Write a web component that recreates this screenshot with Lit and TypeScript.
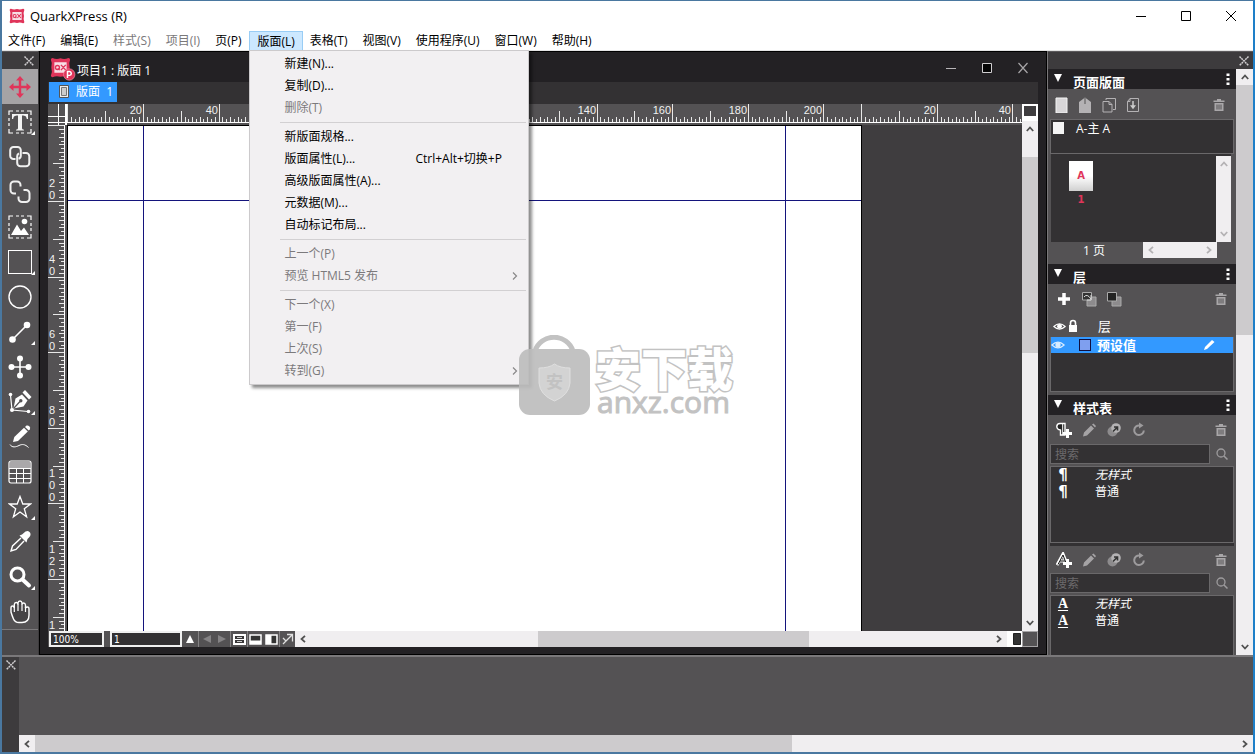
import { LitElement, html, svg, css, nothing } from "lit";
import { customElement, property } from "lit/decorators.js";
import { classMap } from "lit/directives/class-map.js";
import { styleMap } from "lit/directives/style-map.js";

const PX_PER_MM = 3.78;
const PAGE_MM = 210;

const toolIcon = (body: unknown) => html`<svg class="tool-icon" viewBox="0 0 24 24" width="24" height="24" aria-hidden="true">${body}</svg>`;
const smallIcon = (body: unknown) => html`<svg viewBox="0 0 16 16" width="16" height="16" aria-hidden="true">${body}</svg>`;

const dashedBox = svg`<path d="M1 5V1H5M8 1H11M13 1H16M19 1H23V5M23 8V11M23 13V16M23 19V23H19M16 23H13M11 23H8M5 23H1V19M1 16V13M1 11V8" fill="none" stroke="#fff" stroke-width="1.2"/>`;

const tools = [
  { name: "Item", active: true, more: false, icon: svg`<path d="M12 1l4 4.5h-2.8v5.300h5.300V8L23 12l-4.500 4v-2.800h-5.300v5.300H16L12 23l-4-4.500h2.800v-5.300H5.500V16L1 12l4.500-4v2.800h5.300V5.500H8z" fill="#e0355a"/>` },
  { name: "Text", active: false, more: true, icon: svg`${dashedBox}<path d="M4 4H20V9H18.800C18.500 6.500 17.500 5.500 14 5.500V18C14 19.500 14.800 19.500 16 19.700V20.500H8V19.700C9.200 19.500 10 19.500 10 18V5.500C6.500 5.500 5.500 6.500 5.200 9H4Z" fill="#f4f4f4"/>` },
  { name: "Link", active: false, more: false, icon: svg`<g fill="none" stroke="#f0f0f0" stroke-width="2"><path d="M7.500 14H5.500A3.300 3.300 0 0 1 2.200 10.700V5.300A3.300 3.300 0 0 1 5.500 2H9.500A3.300 3.300 0 0 1 12.800 5.300V10.700A3.300 3.300 0 0 1 10.500 13.800"/><path d="M14.500 8H18A3.300 3.300 0 0 1 21.300 11.300V18A3.300 3.300 0 0 1 18 21.300H12.500A3.300 3.300 0 0 1 9.200 18V11.300A3.300 3.300 0 0 1 11 8.300"/></g>` },
  { name: "Unlink", active: false, more: false, icon: svg`<g fill="none" stroke="#f0f0f0" stroke-width="2"><path d="M8 13.500H6A3.500 3.500 0 0 1 2.500 10V5A3.500 3.500 0 0 1 6 1.500H9A3.500 3.500 0 0 1 12.500 5V6.500"/><path d="M15.500 10H18A3.500 3.500 0 0 1 21.500 13.500V18.500A3.500 3.500 0 0 1 18 22H14A3.500 3.500 0 0 1 10.500 18.500V16.500"/></g>` },
  { name: "Picture", active: false, more: false, icon: svg`${dashedBox}<circle cx="16.500" cy="6.500" r="2.800" fill="#fff"/><path d="M3 20L9 9.500L13 16L16 12.500L21 20Z" fill="#fff"/>` },
  { name: "Rectangle", active: false, more: true, icon: svg`<rect x=".500" y=".500" width="23" height="23" fill="none" stroke="#fff"/>` },
  { name: "Oval", active: false, more: false, icon: svg`<circle cx="12" cy="12" r="11" fill="none" stroke="#fff" stroke-width="1.400"/>` },
  { name: "Line", active: false, more: true, icon: svg`<path d="M5 19L19 5" stroke="#fff" stroke-width="1.600"/><circle cx="19" cy="5" r="3.300" fill="#fff"/><circle cx="4.500" cy="19.500" r="3.300" fill="#fff"/>` },
  { name: "Move points", active: false, more: false, icon: svg`<path d="M12 4V20M4 12H20" stroke="#fff" stroke-width="1.600"/><g fill="#fff"><circle cx="12" cy="3.500" r="3"/><circle cx="12" cy="20.500" r="3"/><circle cx="3.500" cy="12" r="3"/><circle cx="20.500" cy="12" r="3"/></g>` },
  { name: "Pen", active: false, more: true, icon: svg`<path d="M2.500 5L4 20L20 21.500" fill="none" stroke="#fff" stroke-width="1.200"/><g fill="#fff"><circle cx="2.500" cy="4.500" r="1.800"/><circle cx="4" cy="20" r="2"/><circle cx="20.500" cy="21.500" r="1.800"/><path d="M5.500 18.500L7.500 8.500L14 4.500L19.500 10.500L15.500 16.500Z"/><path d="M14.500 2.500L17 0L23.500 7L21 9.500Z"/></g><path d="M6 18L12 11.500" stroke="#545254" stroke-width="1.200"/><circle cx="12.800" cy="10.800" r="1.700" fill="#545254"/>` },
  { name: "Pencil", active: false, more: false, icon: svg`<g fill="#fff"><path d="M5 17L6.300 12L16 2.800L19.800 6.600L10 16Z"/><path d="M17 2L18.500.600Q20 0 21.300 1.200Q22.800 2.800 21.800 4.300L20.700 5.500Z"/></g><path d="M2 19.500C4 23 8 22 11 20.500S17 19 20.500 22.500" fill="none" stroke="#fff" stroke-width="1"/>` },
  { name: "Table", active: false, more: false, icon: svg`<rect x="1" y="1" width="22" height="22" rx="2" fill="none" stroke="#fff" stroke-width="1.200"/><path d="M2 2H22V8H2Z" fill="#aaa8aa"/><path d="M1 8.500H23M1 13.500H23M1 18.500H23M8.500 8V23M15.500 8V23" stroke="#fff"/>` },
  { name: "Star", active: false, more: true, icon: svg`<path d="M12 1.500L14.800 9H22.500L16.300 13.800L18.600 21.800L12 17L5.400 21.800L7.700 13.800L1.500 9H9.200Z" fill="none" stroke="#fff" stroke-width="1.300"/>` },
  { name: "Eyedropper", active: false, more: false, icon: svg`<path d="M13 8L4.500 16L3 21L8 19.500L16 11" fill="none" stroke="#fff" stroke-width="1.400"/><path d="M11.500 5.500L14 4.500L17.500 1.500Q20.500 0 22 2.500Q23.500 5 21 7.500L19.500 9L18.500 12.500Z" fill="#fff"/>` },
  { name: "Zoom", active: false, more: true, icon: svg`<circle cx="9.500" cy="9.500" r="6.500" fill="none" stroke="#fff" stroke-width="3"/><path d="M14.500 14.500L21 20.500" stroke="#fff" stroke-width="4" stroke-linecap="round"/>` },
  { name: "Pan", active: false, more: false, icon: svg`<path d="M3 8Q3 6 4.500 6T6.300 8V4.500Q6.500 2.500 8.200 2.500T10 4.500V3Q10.200 1 12 1T14 3V4.500Q14.200 3 15.700 3T17.500 5V8Q18 7 19.500 7T21 9V15Q21 22.500 14 22.500H11Q7 22.500 5.500 19T3 12Z" fill="#454345" stroke="#fff" stroke-width="1.400"/><path d="M6.300 7V12M10 4V11M14 4V11M17.500 7V12" stroke="#fff" stroke-width="1.200"/>` },
];

const menus = [
  ["文件(F)"], ["编辑(E)"], ["样式(S)", "off"], ["项目(I)", "off"], ["页(P)"], ["版面(L)", "open"],
  ["表格(T)"], ["视图(V)"], ["使用程序(U)"], ["窗口(W)"], ["帮助(H)"],
];

type Entry = { label: string; off?: boolean; keys?: string; sub?: boolean };
const entryGroups: Entry[][] = [
  [{ label: "新建(N)..." }, { label: "复制(D)..." }, { label: "删除(T)", off: true }],
  [{ label: "新版面规格..." }, { label: "版面属性(L)...", keys: "Ctrl+Alt+切换+P" }, { label: "高级版面属性(A)..." }, { label: "元数据(M)..." }, { label: "自动标记布局..." }],
  [{ label: "上一个(P)", off: true }, { label: "预览 HTML5 发布", off: true, sub: true }],
  [{ label: "下一个(X)", off: true }, { label: "第一(F)", off: true }, { label: "上次(S)", off: true }, { label: "转到(G)", off: true, sub: true }],
];

const trash = smallIcon(svg`<path d="M3 3.500H6V2H10V3.500H13.500V5H2.500V3.500ZM3.500 6H12.500V14H3.500Z" fill="#a9a7a9"/><path d="M6 7.500V12.500M8 7.500V12.500M10 7.500V12.500" stroke="#545254"/>`);
const cross = html`<svg viewBox="0 0 10 10" width="10" height="10" aria-hidden="true"><path d="M0.500 0.500L9.500 9.500M9.500 0.500L0.500 9.500" stroke="#cfcdcf" stroke-width="1.500" stroke-dasharray="2 .6"/></svg>`;
const plusMark = svg`<path d="M11.500 7V16M7 11.500H16" stroke="#fff" stroke-width="3"/>`;
const pencil = smallIcon(svg`<path d="M2 14.500L3 10.500L10 3.500L13 6.500L6 13.500ZM11 2.500L12.500 1.500L15 4L14 5.500Z" fill="#a5a3a5"/>`);
const duplicate = smallIcon(svg`<circle cx="6.500" cy="9.500" r="5" fill="#8d8b8d"/><circle cx="10" cy="6" r="4.800" fill="#b4b2b4"/><path d="M7 9.500L11 5.500M8 5H11.500V8.500" stroke="#333" stroke-width="1.600" fill="none"/>`);
const refresh = smallIcon(svg`<path d="M8.500 3.500A4.800 4.800 0 1 0 12.800 8.500" fill="none" stroke="#9d9b9d" stroke-width="2"/><path d="M8 .500V6.500L12.500 3.500Z" fill="#9d9b9d"/>`);
const magnifier = smallIcon(svg`<circle cx="7" cy="7" r="4" fill="none" stroke="#9d9b9d" stroke-width="1.300"/><path d="M10 10L13.500 13.500" stroke="#9d9b9d" stroke-width="1.500"/>`);
const eye = (fill: string) => svg`<path d="M1 8Q8 1.500 15 8Q8 14.500 1 8Z" fill="none" stroke="${fill}" stroke-width="1.300"/><circle cx="8" cy="7.800" r="3" fill="${fill}"/>`;

/** Ruler strip, scaled in millimetres; it starts again at zero after every page. */
@customElement("mm-ruler")
class MmRuler extends LitElement {
  @property({ type: Boolean, reflect: true }) vertical = false;
  @property({ type: Number }) span = 280;

  static styles = css`
    :host { display: block; overflow: hidden; min-width: 0; min-height: 0; background: #545254; }
    :host([vertical]) { grid-column: 1; }
    svg { display: block; width: 100%; height: 100%; overflow: hidden; }
    text { fill: #f0f0f0; font: 11px "Liberation Sans", sans-serif; }
  `;

  render() {
    const size = this.vertical ? 19 : 21;
    const base = size - 2;
    const marks = [];
    for (let mm = 0; mm <= this.span; mm++) {
      const value = !this.vertical && mm >= PAGE_MM ? mm - PAGE_MM : mm;
      const at = Math.round(0.4 + mm * PX_PER_MM);
      const length = value % 20 === 0 ? base : value % 10 === 0 ? 12 : value % 2 ? 6 : 4;
      const start = base - length;
      marks.push(this.vertical
        ? svg`<rect x=${start} y=${at} width=${length} height="1" fill="#e8e8e8"/>`
        : svg`<rect x=${at} y=${start} width="1" height=${length} fill="#e8e8e8"/>`);
      if (value > 0 && value % 20 === 0) {
        const digits = String(value);
        marks.push(this.vertical
          ? [...digits].map((d, i) => svg`<text x="4" text-anchor="middle" y=${at - 2 - 12 * (digits.length - 1 - i)}>${d}</text>`)
          : svg`<text x=${at - 1} y="10" text-anchor="end">${digits}</text>`);
      }
    }
    const line = this.vertical
      ? svg`<rect x=${base - 1} width="1" height="100%" fill="#fff"/>`
      : svg`<rect y=${base - 1} width="100%" height="1" fill="#fff"/>`;
    return html`<svg aria-hidden="true">${marks}${line}</svg>`;
  }
}

/** Scroll bar with an arrow at each end. The thumb sits between two lengths of track. */
@customElement("scroll-strip")
class ScrollStrip extends LitElement {
  @property({ type: Boolean, reflect: true }) vertical = false;
  @property({ type: Boolean, reflect: true }) idle = false;
  @property({ type: Array }) parts: number[] = [0, 0, 1];

  static styles = css`
    :host { display: flex; min-width: 0; min-height: 0; background: #f0eef0; color: #505050; }
    :host([vertical]) { flex-direction: column; }
    :host([idle]) { color: #b4b2b4; }
    button { flex: 0 0 16px; display: grid; place-items: center; padding: 0; border: 0; background: none; color: inherit; }
    .thumb { background: #cdcbcd; }
    .left { transform: rotate(-90deg); }
    .right { transform: rotate(90deg); }
    .down { transform: rotate(180deg); }
  `;

  private arrow(turn: string) {
    return html`<button aria-label="scroll ${turn}"><svg class=${turn} viewBox="0 0 8 8" width="8" height="8"><path d="M.800 6L4 2.500L7.200 6" fill="none" stroke="currentColor" stroke-width="1.800"/></svg></button>`;
  }

  render() {
    const [before, thumb, after] = this.parts;
    return html`${this.arrow(this.vertical ? "up" : "left")}
      <div style=${styleMap({ flexGrow: before })}></div>
      <div class="thumb" style=${styleMap({ flexGrow: thumb })}></div>
      <div style=${styleMap({ flexGrow: after })}></div>
      ${this.arrow(this.vertical ? "down" : "right")}`;
  }
}

@customElement("app-root")
class AppRoot extends LitElement {
  static styles = css`
    :host {
      display: flex; flex-direction: column; position: relative; box-sizing: border-box; height: 100vh; overflow: hidden;
      border: solid #4a78a0; border-width: 1px 2px 2px 2px; border-right-color: #1e7fc8;
      background: #fff; color: #000;
      font: 12px/16px "Open Sans", "Noto Sans CJK SC", sans-serif;
    }
    * { box-sizing: border-box; }
    button { font: inherit; color: inherit; padding: 0; border: 0; background: none; white-space: nowrap; }
    svg { display: block; }

    .title-bar { display: flex; align-items: center; height: 30px; flex: none; padding-left: 7px; }
    .title-bar h1 { flex: 1; margin: 0 0 0 5px; font-size: 13px; font-weight: 400; }
    .title-bar button { display: grid; place-items: center; width: 45px; height: 28px; }

    .menu-bar { display: flex; height: 20px; flex: none; border-bottom: 1px solid #e4e4e4; }
    .menu-slot { position: relative; }
    .menu-bar .head { height: 19px; padding: 0 8px 0 7px; line-height: 18px; }
    .menu-slot:first-child .head { padding-left: 6px; }
    .menu-bar .off { color: #7a787a; }
    .menu-bar .open { background: #cce8ff; border: solid #99cdf5; border-width: 1px 1px 0; padding: 0 7px; line-height: 17px; }
    .menu {
      position: absolute; z-index: 5; top: 100%; left: 0; width: 280px; padding: 2px 0;
      background: #f2f0f2; border: 1px solid #cccacc; box-shadow: 3px 3px 3px rgba(0, 0, 0, .45);
    }
    .menu hr { height: 1px; margin: 3px 2px 3px 30px; border: 0; background: #d2d0d2; }
    .menu .entry { display: grid; grid-template-columns: 131px 1fr 10px; align-items: center; width: 100%; height: 22px; padding: 0 7px 0 34px; text-align: left; }
    .menu .entry:disabled { color: #7c7a7c; }
    .entry svg { grid-column: 3; }

    .work { flex: 1; display: flex; min-height: 0; background: #4a484a; }
    .close-strip { display: flex; justify-content: flex-end; align-items: center; height: 18px; flex: none; padding-right: 4px; background: #3d3b3d; border-top: 1px solid #5c5a5c; }
    .tools { flex: 0 0 37px; border-right: 1px solid #3d3b3d; }
    .tool-list { display: flex; flex-direction: column; background: #545254; border-bottom: 1px solid #7a787a; }
    .tool { position: relative; height: 35px; display: grid; place-items: center; padding-right: 1px; }
    .tool.active { background: #a5a3a5; }
    .tool .corner { position: absolute; right: 3px; bottom: 4px; }

    .doc { flex: 1; min-width: 0; display: flex; flex-direction: column; padding: 0 8px 7px; background: #232124; border: 1px solid #000; }
    .doc-title { display: flex; align-items: center; height: 30px; flex: none; padding-left: 2px; color: #fff; }
    .doc-title h2 { flex: 1; margin: 0 0 0 6px; padding-top: 7px; font: inherit; }
    .doc-title button { display: grid; place-items: center; width: 36px; height: 30px; padding-top: 2px; }
    .doc-title .last { margin-right: -3px; }
    .tabs { height: 22px; flex: none; padding-left: 1px; background: #333133; }
    .tab { display: flex; align-items: center; gap: 6px; height: 20px; padding: 0 4px 0 9px; background: #3399ff; color: #fff; }
    .doc-grid { flex: 1; min-height: 0; display: grid; grid-template: 21px minmax(0, 1fr) 16px / 19px minmax(0, 1fr) 16px; }
    .origin { background: #545254; }
    .pasteboard { width: 100%; height: 100%; background: #3f3d3f; }
    .scroll-col { grid-column: 3; grid-row: 1 / 3; display: flex; flex-direction: column; }
    .scroll-col scroll-strip, .status scroll-strip { flex: 1; }
    .split { flex: none; border: solid #fff; border-width: 2px 2px 5px; background: #3f3d3f; width: 16px; height: 17px; }
    .status { grid-row: 3; grid-column: 1 / 3; display: flex; min-width: 0; background: #545254; color: #fff; font-size: 10px; }
    .status input { height: 16px; padding: 0 2px; border: 2px solid #f0f0f0; background: #333133; color: #fff; font: 10px/12px "DejaVu Sans Condensed", "Noto Sans", sans-serif; }
    .zoom-box { width: 55px; margin-left: 1px; }
    .page-box { width: 72px; margin-left: 6px; }
    .status button { display: grid; place-items: center; height: 16px; width: 17px; border-right: 1px solid #858385; }
    .status .bare { border: 0; width: 15px; }
    .status .last { border: 0; width: 15px; }
    .size-box { background: #545254; border: 1px solid #a5a3a5; }

    .palettes { flex: 0 0 206px; display: flex; flex-direction: column; border-left: 1px solid #7a787a; background: #545254; color: #fff; }
    .palette-row { flex: 1; display: grid; grid-template-columns: minmax(0, 1fr) 17px; min-height: 0; }
    .palette-stack { display: flex; flex-direction: column; min-height: 0; overflow: hidden; }
    .palette-head { display: flex; align-items: center; gap: 10px; height: 20px; flex: none; padding: 0 5px 0 5px; background: #232124; }
    .palette-head h3 { flex: 1; margin: 0; padding-top: 5px; font: bold 13px/14px "Noto Sans CJK SC", sans-serif; }
    .bar { display: flex; align-items: center; height: 30px; flex: none; padding: 0 3px; }
    .bar button { display: grid; place-items: center; width: 25px; height: 20px; }
    .bar .end { margin-left: auto; }
    .bar.pages { padding: 2px 5px 0 1px; }
    .bar.pages button { width: 24px; }
    .bar.short { height: 29px; }
    .bar.tight { height: 27px; }
    .well { flex: none; margin: 0 2px; background: #333133; border: 1px solid #6a686a; }
    .masters { display: flex; gap: 12px; height: 35px; padding: 1px 2px; line-height: 15px; }
    .chip { width: 11px; height: 12px; margin-top: 1px; background: #f4f4f4; }
    .thumbs { display: grid; grid-template-columns: minmax(0, 1fr) 15px; height: 88px; flex: none; margin: 0 5px 0 3px; padding-top: 2px; background: #333133; }
    .sheet { margin: 5px 0 0 18px; width: 24px; text-align: center; color: #e0355a; font: bold 10px/17px "DejaVu Sans", sans-serif; }
    .leaf { height: 30px; line-height: 30px; background: linear-gradient(#fff 50%, #d0d0d0); }
    .count { display: flex; height: 22px; flex: none; justify-content: flex-end; padding-right: 19px; line-height: 17px; }
    .count span { margin-right: 38px; }
    .count scroll-strip { width: 74px; height: 16px; }
    .layer { display: flex; align-items: center; height: 18px; flex: none; font: 13px/16px "Noto Sans CJK SC", sans-serif; }
    .layer-head { margin: 4px 2px 2px; padding-left: 3px; }
    .layer-head span { margin-left: 18px; }
    .layers { height: 55px; margin-bottom: 3px; border-top: 0; }
    .picked { height: 16px; background: #3399ff; font-weight: 700; }
    .picked .swatch { width: 12px; height: 12px; margin: 0 6px 0 14px; background: #7f9fef; border: 1px solid #101040; }
    .picked svg:last-child { margin-left: auto; margin-right: 16px; }
    .search { display: flex; flex: none; align-items: center; gap: 4px; height: 20px; padding-left: 2px; }
    .search input { width: 160px; height: 20px; padding: 0 4px; border: 1px solid #6a686a; background: #333133; color: #fff; font: 12px/16px "Open Sans", "Noto Sans CJK SC", sans-serif; }
    .search input::placeholder { color: #6c6a6c; opacity: 1; }
    .styles { height: 77px; margin-top: 2px; margin-bottom: 3px; box-shadow: 0 3px 0 #333133; }
    .styles.rest { flex: 1; height: auto; margin-bottom: 0; border-bottom: 0; box-shadow: none; }
    .style { display: grid; grid-template-columns: 24px 1fr; column-gap: 20px; height: 17px; line-height: 15px; }
    .style i { text-align: center; font: bold 15px/16px "DejaVu Sans", sans-serif; }
    .style .letter { font: 14px/16px "Liberation Serif", serif; font-weight: 700; text-decoration: underline; text-underline-offset: 2px; }
    .style em { font-style: italic; }

    .dock { flex: 0 0 97px; display: grid; grid-template: minmax(0, 1fr) 17px / 17px minmax(0, 1fr); background: #545254; border-top: 2px solid #7a787a; }
    .dock-side { grid-row: 1 / 3; padding: 3px 0 0 4px; background: #3d3b3d; }

    .badge { position: absolute; z-index: 6; left: 517px; top: 334px; display: flex; gap: 4px; color: #bcbcbc; opacity: .9; pointer-events: none; }
    .badge-words { display: flex; flex-direction: column; padding-top: 12px; }
    .badge-name { color: #fff; font: 900 46px/38px "Noto Sans CJK SC", sans-serif; -webkit-text-stroke: 3px #bcbcbc; paint-order: stroke fill; }
    .badge-site { margin-top: 5px; padding-left: 2px; font: 30px/24px "Open Sans", sans-serif; -webkit-text-stroke: 1px #bcbcbc; }
  `;

  private logo(size: number, page: boolean) {
    return html`<svg viewBox="0 0 24 24" width=${size} height=${size} overflow="visible" aria-hidden="true">
      <path d="M3 1Q7 3 12 1.500Q17 3 21 1Q23 1 23 3Q21 7 22.500 12Q21 17 23 21Q23 23 21 23Q17 21 12 22.500Q7 21 3 23Q1 23 1 21Q3 17 1.500 12Q3 7 1 3Q1 1 3 1Z" fill="#e0355a"/>
      <rect x="5" y="6" width="14" height="12" fill="#f7dfe5"/>
      <circle cx="8.500" cy="12" r="2.300" fill="none" stroke="#e0355a" stroke-width="1.600"/>
      <path d="M9 13L11 15M12.500 9L18 15M18 9L12.500 15" stroke="#e0355a" stroke-width="1.600"/>
      ${page ? svg`<circle cx="22" cy="20" r="6.500" fill="#e0355a" stroke="#f2a0b2" stroke-width=".700"/><path d="M20 24V16.500H22.500A2.300 2.300 0 0 1 22.500 21H20" fill="none" stroke="#fff" stroke-width="1.700"/>` : nothing}
    </svg>`;
  }

  private menuPopup() {
    return html`<div class="menu" role="menu">${entryGroups.map((group, i) => html`${i ? html`<hr />` : nothing}${group.map((e) => html`
      <button class="entry" role="menuitem" ?disabled=${e.off}><span>${e.label}</span>${e.keys ? html`<span>${e.keys}</span>` : nothing}${e.sub
        ? html`<svg viewBox="0 0 8 10" width="8" height="10"><path d="M2 1.500L5.500 5L2 8.500" fill="none" stroke="#8a888a" stroke-width="1.200"/></svg>` : nothing}</button>`)}`)}</div>`;
  }

  private head(title: string) {
    return html`<header class="palette-head">
      <svg viewBox="0 0 10 10" width="10" height="10"><path d="M1 0H9L5 8Z" fill="#fff"/></svg>
      <h3>${title}</h3>
      <svg viewBox="0 0 6 14" width="6" height="14"><path d="M1.500 1.500H4.500V4H1.500ZM1.500 6H4.500V8.500H1.500ZM1.500 10.500H4.500V13H1.500Z" fill="#fff"/></svg>
    </header>`;
  }

  private styleBlock(kind: "paragraph" | "character") {
    const para = kind === "paragraph";
    const mark = para ? html`<i>¶</i>` : html`<i class="letter">A</i>`;
    const add = para
      ? svg`<path d="M9 1.500H4Q.800 1.500 .800 4.500T4.500 8V13H9Z" fill="#222" stroke="#fff" stroke-width="1.400"/><path d="M6.700 2V13" stroke="#fff"/>${plusMark}`
      : svg`<path d="M1 13L7 2L11 12M4 9H9" fill="none" stroke="#fff" stroke-width="3"/><path d="M2 12.500L7 3L10 11M4 9H9" fill="none" stroke="#111" stroke-width="1"/>${plusMark}`;
    return html`
      <div class=${classMap({ bar: true, short: para, tight: !para })}>
        <button aria-label="add ${kind} style">${smallIcon(add)}</button>
        <button aria-label="edit">${pencil}</button>
        <button aria-label="duplicate">${duplicate}</button>
        <button aria-label="update">${refresh}</button>
        <button class="end" aria-label="delete">${trash}</button>
      </div>
      <label class="search"><input type="text" aria-label="${kind} search" placeholder="搜索" />${magnifier}</label>
      <div class=${classMap({ well: true, styles: true, rest: !para })}>
        <div class="style">${mark}<em>无样式</em></div>
        <div class="style">${mark}<span>普通</span></div>
      </div>`;
  }

  render() {
    return html`
      <header class="title-bar">
        ${this.logo(16, false)}
        <h1>QuarkXPress (R)</h1>
        <button aria-label="minimize"><svg width="12" height="12"><path d="M1 6.500H11" stroke="#000"/></svg></button>
        <button aria-label="maximize"><svg width="12" height="12"><path d="M1.500 1.500H10.500V10.500H1.500Z" fill="none" stroke="#000"/></svg></button>
        <button aria-label="close"><svg width="12" height="12"><path d="M1 1L11 11M11 1L1 11" stroke="#000"/></svg></button>
      </header>
      <nav class="menu-bar">
        ${menus.map(([label, state]) => html`<div class="menu-slot">
          <button class=${classMap({ head: true, off: state === "off", open: state === "open" })}>${label}</button>
          ${state === "open" ? this.menuPopup() : nothing}
        </div>`)}
      </nav>

      <main class="work">
        <aside class="tools">
          <div class="close-strip">${cross}</div>
          <div class="tool-list">${tools.map((t) => html`
            <button class=${classMap({ tool: true, active: t.active })} aria-label=${t.name}>${toolIcon(t.icon)}${t.more
              ? html`<svg class="corner" width="4" height="4"><path d="M4 0V4H0Z" fill="#fff"/></svg>` : nothing}</button>`)}</div>
        </aside>

        <section class="doc">
          <div class="doc-title">
            ${this.logo(21, true)}
            <h2>项目1 : 版面 1</h2>
            <button aria-label="minimize layout"><svg width="12" height="12"><path d="M1 6.500H11" stroke="#b8b6b8"/></svg></button>
            <button aria-label="maximize layout"><svg width="12" height="12"><path d="M1.500 1.500H10.500V10.500H1.500Z" fill="#050505" stroke="#d0ced0"/></svg></button>
            <button class="last" aria-label="close layout"><svg width="12" height="12"><path d="M1.500 1L10.500 11M10.500 1L1.500 11" stroke="#a8a6a8" stroke-width="1.200"/></svg></button>
          </div>
          <div class="tabs"><button class="tab">
            <svg width="12" height="14"><path d="M1.500 .500H10.500V12.500H1.500Z" fill="#eee" stroke="#555"/><path d="M3.500 2.500H8.500V10.500H3.500Z" fill="#ccc" stroke="#777"/></svg>
            <span>版面&nbsp; 1</span></button></div>
          <div class="doc-grid">
            <svg class="origin" width="19" height="21"><path d="M10.500 0V21M0 12.500H19M0 18.500H19" stroke="#fff" fill="none"/><path d="M18 0V21" stroke="#fff" stroke-width="2"/></svg>
            <mm-ruler .span=${280}></mm-ruler>
            <mm-ruler vertical .span=${140}></mm-ruler>
            <svg class="pasteboard" aria-label="page">
              <rect width="795" height="1124" fill="#000"/><rect x="1" y="1" width="793" height="1122" fill="#fff"/>
              <g fill="#14147c"><rect x="76" y="1" width="1" height="1122"/><rect x="718" y="1" width="1" height="1122"/><rect x="1" y="75" width="793" height="1"/></g>
            </svg>
            <div class="scroll-col"><button class="split" aria-label="split view"></button><scroll-strip vertical .parts=${[20, 196, 262]}></scroll-strip></div>
            <div class="status">
              <input class="zoom-box" type="text" aria-label="zoom" .value=${"100%"} />
              <input class="page-box" type="text" aria-label="page number" .value=${"1"} />
              <button aria-label="page list"><svg width="10" height="10"><path d="M5 1L9 9H1Z" fill="#fff"/></svg></button>
              <button class="bare" aria-label="previous page"><svg width="8" height="8"><path d="M8 0V8L0 4Z" fill="#858385"/></svg></button>
              <button aria-label="next page"><svg width="8" height="8"><path d="M0 0V8L8 4Z" fill="#858385"/></svg></button>
              <button aria-label="master view"><svg width="13" height="11"><path d="M1 1H12V10H1Z" fill="#3a383a" stroke="#fff" stroke-width="2"/><path d="M1 5.500H12" stroke="#fff"/><path d="M4 3.500H9M4 7.500H9" stroke="#ccc"/></svg></button>
              <button class="bare" aria-label="split horizontally"><svg width="13" height="11"><path d="M1 1H12V10H1Z" fill="#333" stroke="#fff" stroke-width="1.500"/><path d="M1 6.500H12V10H1Z" fill="#fff"/></svg></button>
              <button aria-label="split vertically"><svg width="13" height="11"><path d="M1 1H12V10H1Z" fill="#333" stroke="#fff" stroke-width="1.500"/><path d="M1 1H6.500V10H1Z" fill="#fff"/></svg></button>
              <button class="last" aria-label="export"><svg width="12" height="12"><path d="M1 5L4 8L1 11M4 8L10 2M5 1.500H10.500V8.500" fill="none" stroke="#e0e0e0" stroke-width="1.300"/></svg></button>
              <scroll-strip .parts=${[226, 271, 181]}></scroll-strip>
              <button class="last" aria-label="split pane"><svg width="15" height="16"><path d="M0 0H15V16H0Z" fill="#fff"/><path d="M6.500 2.500H13.500V13.500H6.500Z" fill="#333" stroke="#222"/></svg></button>
            </div>
            <div class="size-box"></div>
          </div>
        </section>

        <aside class="palettes">
          <div class="close-strip">${cross}</div>
          <div class="palette-row">
            <div class="palette-stack">
              ${this.head("页面版面")}
              <div class="bar pages">
                <button aria-label="blank page">${smallIcon(svg`<path d="M3 1H14V16H3Z" fill="#d8d6d8" stroke="#f4f4f4"/>`)}</button>
                <button aria-label="facing page">${smallIcon(svg`<path d="M2 5L8 .500L14 5V16H2Z" fill="#b4b2b4"/><path d="M8 1V7" stroke="#555"/>`)}</button>
                <button aria-label="duplicate page">${smallIcon(svg`<path d="M5 3V1.500H14.500V12.500H12M2 4.500H8L11 7.500V15H2ZM8 4.500V7.500H11" fill="none" stroke="#b4b2b4"/>`)}</button>
                <button aria-label="insert page">${smallIcon(svg`<path d="M5 1.500H13.500V14.500H2.500V4.500ZM5 1.500V4.500H2.500" fill="none" stroke="#b4b2b4"/><path d="M8 4V10M6.500 9L8 11L9.500 9Z" fill="#ccc" stroke="#ccc" stroke-width="1.500"/>`)}</button>
                <button class="end" aria-label="delete page">${trash}</button>
              </div>
              <div class="well masters"><div class="chip"></div><span>A-主 A</span></div>
              <div class="thumbs"><div class="sheet"><div class="leaf">A</div>1</div><scroll-strip vertical idle></scroll-strip></div>
              <div class="count"><span>1 页</span><scroll-strip idle></scroll-strip></div>

              ${this.head("层")}
              <div class="bar short">
                <button aria-label="new layer">${smallIcon(svg`<path d="M8 2V14M2 8H14" stroke="#fff" stroke-width="3.500"/>`)}</button>
                <button aria-label="move to layer">${smallIcon(svg`<path d="M6 6H15V15H6Z" fill="#8d8b8d" stroke="#aaa"/><path d="M1.500 1.500H10.500V9H1.500Z" fill="#333" stroke="#aaa"/><path d="M3 6Q6 2 10 8M10 4V9H6" fill="none" stroke="#ddd"/>`)}</button>
                <button aria-label="merge layers">${smallIcon(svg`<path d="M6 6H15V15H6Z" fill="#8d8b8d" stroke="#aaa"/><path d="M1.500 1.500H10.500V10H1.500Z" fill="#222" stroke="#aaa"/>`)}</button>
                <button class="end" aria-label="delete layer">${trash}</button>
              </div>
              <div class="layer layer-head">
                <svg viewBox="0 0 16 16" width="13" height="13">${eye("#fff")}</svg>
                <svg viewBox="0 0 14 14" width="14" height="14"><path d="M3 6H11V13H3Z" fill="#fff"/><path d="M4.500 6V4A2.500 2.500 0 0 1 9.500 4V6" fill="none" stroke="#fff" stroke-width="1.600"/></svg>
                <span>层</span>
              </div>
              <div class="well layers"><div class="layer picked">
                <svg viewBox="0 0 16 16" width="14" height="14">${eye("#d8ecff")}</svg><div class="swatch"></div><span>预设值</span>
                <svg viewBox="0 0 16 16" width="16" height="16"><path d="M3 13L4 10L11 3L13.500 5L6 12Z" fill="#fff"/></svg></div></div>

              ${this.head("样式表")}
              ${this.styleBlock("paragraph")}
              ${this.styleBlock("character")}
            </div>
            <scroll-strip vertical .parts=${[0, 249, 303]}></scroll-strip>
          </div>
        </aside>
      </main>

      <footer class="dock">
        <div class="dock-side">${cross}</div>
        <div></div>
        <scroll-strip .parts=${[0, 756, 444]}></scroll-strip>
      </footer>

      <div class="badge">
        <svg width="72" height="82" viewBox="0 0 72 82">
          <path d="M16 16A20 20 0 0 1 54 16" fill="none" stroke="#bcbcbc" stroke-width="5"/>
          <rect y="14" width="71" height="66" rx="11" fill="#bcbcbc"/>
          <path d="M20 33Q30 33 35.500 29Q41 33 51 33V48Q50 60 35.500 66Q21 60 20 48Z" fill="#cfcfcf" stroke="#dcdcdc"/>
          <text x="35.500" y="53" text-anchor="middle" font-size="17" font-weight="700" font-family="Noto Sans CJK SC" fill="#bcbcbc">安</text>
        </svg>
        <div class="badge-words"><span class="badge-name">安下载</span><span class="badge-site">anxz.com</span></div>
      </div>
    `;
  }
}
